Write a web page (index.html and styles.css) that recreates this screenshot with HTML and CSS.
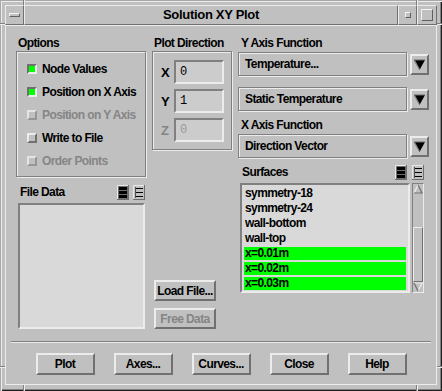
FILE: index.html
```html
<!DOCTYPE html>
<html>
<head>
<meta charset="utf-8">
<title>Solution XY Plot</title>
<link rel="stylesheet" href="styles.css">
</head>
<body>
<div class="window">
  <span class="tick tv tl"></span><span class="tick tv tr"></span>
  <span class="tick tv bl"></span><span class="tick tv br"></span>
  <span class="tick th lt"></span><span class="tick th rt"></span>
  <span class="tick th lb"></span><span class="tick th rb"></span>

  <div class="titlebar">
    <div class="tb-btn tb-menu"><span class="menu-bar"></span></div>
    <div class="tb-title">Solution XY Plot</div>
    <div class="tb-btn tb-min"><span class="min-sq"></span></div>
    <div class="tb-btn tb-max"><span class="max-sq"></span></div>
  </div>

  <div class="client">
    <div class="top">
      <div class="col col1">
        <div class="label">Options</div>
        <div class="frame options">
          <div class="toggle on"><span class="box"></span><span>Node Values</span></div>
          <div class="toggle on"><span class="box"></span><span>Position on X Axis</span></div>
          <div class="toggle disabled"><span class="box"></span><span>Position on Y Axis</span></div>
          <div class="toggle"><span class="box"></span><span>Write to File</span></div>
          <div class="toggle disabled"><span class="box"></span><span>Order Points</span></div>
        </div>
        <div class="list-head file-head">
          <span class="head-label">File Data</span>
          <span class="icons">
            <svg class="ico" width="12" height="15" viewBox="0 0 12 15"><rect x="0" y="0" width="12" height="15" fill="#6e6e6e"/><rect x="0" y="0" width="11" height="1" fill="#e8e8e8"/><rect x="0" y="0" width="1" height="14" fill="#e8e8e8"/><rect x="2" y="2" width="8" height="3" fill="#000"/><rect x="2" y="6" width="8" height="3" fill="#000"/><rect x="2" y="10" width="8" height="3" fill="#000"/></svg>
            <svg class="ico" width="12" height="15" viewBox="0 0 12 15"><rect x="0" y="0" width="12" height="15" fill="#6e6e6e"/><rect x="0" y="0" width="11" height="14" fill="#e8e8e8"/><rect x="1" y="1" width="10" height="13" fill="#c0c0c0"/><rect x="2" y="2" width="1" height="11" fill="#505050"/><rect x="3" y="3" width="7" height="1" fill="#000"/><rect x="3" y="7" width="7" height="1" fill="#000"/><rect x="3" y="11" width="7" height="1" fill="#000"/></svg>
          </span>
        </div>
        <div class="listbox file-list"></div>
      </div>

      <div class="col col2">
        <div class="label">Plot Direction</div>
        <div class="frame direction">
          <div class="dir-row"><span class="axis">X</span><span class="field">0</span></div>
          <div class="dir-row"><span class="axis">Y</span><span class="field">1</span></div>
          <div class="dir-row disabled"><span class="axis">Z</span><span class="field">0</span></div>
        </div>
        <div class="side-buttons">
          <div class="btn side-btn">Load File...</div>
          <div class="btn side-btn disabled">Free Data</div>
        </div>
      </div>

      <div class="col col3">
        <div class="label l3">Y Axis Function</div>
        <div class="opt-row">
          <div class="opt-box">Temperature...</div>
          <div class="opt-arrow"><svg width="15" height="17" viewBox="0 0 15 17"><polygon points="2,4 13,4 7.5,14" fill="#000"/><polyline points="2,4 13,4" stroke="#6a6a6a" stroke-width="1" fill="none"/><polyline points="2.5,4.5 7.5,13.5" stroke="#8a8a8a" stroke-width="1.2" fill="none"/></svg></div>
        </div>
        <div class="opt-row r2">
          <div class="opt-box">Static Temperature</div>
          <div class="opt-arrow"><svg width="15" height="17" viewBox="0 0 15 17"><polygon points="2,4 13,4 7.5,14" fill="#000"/><polyline points="2,4 13,4" stroke="#6a6a6a" stroke-width="1" fill="none"/><polyline points="2.5,4.5 7.5,13.5" stroke="#8a8a8a" stroke-width="1.2" fill="none"/></svg></div>
        </div>
        <div class="label l3 xlab">X Axis Function</div>
        <div class="opt-row">
          <div class="opt-box">Direction Vector</div>
          <div class="opt-arrow"><svg width="15" height="17" viewBox="0 0 15 17"><polygon points="2,4 13,4 7.5,14" fill="#000"/><polyline points="2,4 13,4" stroke="#6a6a6a" stroke-width="1" fill="none"/><polyline points="2.5,4.5 7.5,13.5" stroke="#8a8a8a" stroke-width="1.2" fill="none"/></svg></div>
        </div>
        <div class="list-head surf-head">
          <span class="head-label">Surfaces</span>
          <span class="icons">
            <svg class="ico" width="12" height="15" viewBox="0 0 12 15"><rect x="0" y="0" width="12" height="15" fill="#6e6e6e"/><rect x="0" y="0" width="11" height="1" fill="#e8e8e8"/><rect x="0" y="0" width="1" height="14" fill="#e8e8e8"/><rect x="2" y="2" width="8" height="3" fill="#000"/><rect x="2" y="6" width="8" height="3" fill="#000"/><rect x="2" y="10" width="8" height="3" fill="#000"/></svg>
            <svg class="ico" width="12" height="15" viewBox="0 0 12 15"><rect x="0" y="0" width="12" height="15" fill="#6e6e6e"/><rect x="0" y="0" width="11" height="14" fill="#e8e8e8"/><rect x="1" y="1" width="10" height="13" fill="#c0c0c0"/><rect x="2" y="2" width="1" height="11" fill="#505050"/><rect x="3" y="3" width="7" height="1" fill="#000"/><rect x="3" y="7" width="7" height="1" fill="#000"/><rect x="3" y="11" width="7" height="1" fill="#000"/></svg>
          </span>
        </div>
        <div class="surf-area">
          <div class="listbox surf-list">
            <div class="item"><div class="item-in">symmetry-18</div></div>
            <div class="item"><div class="item-in">symmetry-24</div></div>
            <div class="item"><div class="item-in">wall-bottom</div></div>
            <div class="item"><div class="item-in">wall-top</div></div>
            <div class="item sel"><div class="item-in">x=0.01m</div></div>
            <div class="item sel"><div class="item-in">x=0.02m</div></div>
            <div class="item sel"><div class="item-in">x=0.03m</div></div>
          </div>
          <div class="scrollbar">
            <svg class="sb-arrow" width="10" height="10" viewBox="0 0 10 10"><polyline points="1,9 5,1" stroke="#ececec" stroke-width="1.2" fill="none"/><polyline points="5,1 9,9 1,9" stroke="#707070" stroke-width="1.2" fill="none"/></svg>
            <div class="sb-gap"></div>
            <div class="sb-slider"></div>
            <div class="sb-rest"></div>
            <svg class="sb-arrow" width="10" height="10" viewBox="0 0 10 10"><polyline points="1,1 9,1 5,9" stroke="#ececec" stroke-width="1.2" fill="none"/><polyline points="1,1 5,9" stroke="#707070" stroke-width="1.2" fill="none"/></svg>
          </div>
        </div>
      </div>
    </div>

    <div class="separator"></div>

    <div class="buttons">
      <div class="btn main-btn">Plot</div>
      <div class="btn main-btn">Axes...</div>
      <div class="btn main-btn">Curves...</div>
      <div class="btn main-btn">Close</div>
      <div class="btn main-btn">Help</div>
    </div>
  </div>
</div>
</body>
</html>
```

FILE: styles.css
```css
* { box-sizing: border-box; }
html, body { margin: 0; padding: 0; }
body {
  width: 442px;
  height: 391px;
  overflow: hidden;
  background: #c0c0c0;
  color: #000;
  font-family: "Liberation Sans", Arial, sans-serif;
  font-weight: bold;
  font-size: 12px;
  letter-spacing: -0.6px;
}

.window {
  position: relative;
  width: 442px;
  height: 391px;
  padding: 5px 5px 6px 5px;
  display: flex;
  flex-direction: column;
  background: #c0c0c0;
  box-shadow: inset 1px 1px 0 #a8a8a8, inset 2px 2px 0 #ececec, inset -1px -1px 0 #202020, inset -2px -2px 0 #808080;
}

/* resize-handle ticks on the frame */
.tick { position: absolute; display: block; }
.tv { width: 2px; height: 5px; border-left: 1px solid #808080; border-right: 1px solid #ececec; }
.th { width: 5px; height: 2px; border-top: 1px solid #808080; border-bottom: 1px solid #ececec; }
.tl { left: 23px; top: 0; }
.tr { left: 416px; top: 0; }
.bl { left: 23px; bottom: 0; height: 6px; }
.br { left: 416px; bottom: 0; height: 6px; }
.lt { left: 0; top: 23px; }
.rt { right: 0; top: 23px; }
.lb { left: 0; top: 366px; }
.rb { right: 0; top: 366px; }

/* title bar */
.titlebar { display: flex; height: 20px; }
.tb-btn {
  width: 19px;
  height: 20px;
  border: 1px solid;
  border-color: #ececec #707070 #707070 #ececec;
  display: flex;
  align-items: center;
  justify-content: center;
}
.tb-max { width: 20px; }
.menu-bar {
  width: 11px; height: 4px;
  border: 1px solid;
  border-color: #f4f4f4 #606060 #606060 #f4f4f4;
}
.min-sq {
  width: 6px; height: 6px;
  border: 1px solid;
  border-color: #f4f4f4 #606060 #606060 #f4f4f4;
}
.max-sq {
  width: 12px; height: 12px;
  border: 1px solid;
  border-color: #f4f4f4 #606060 #606060 #f4f4f4;
}
.tb-title {
  flex: 1;
  height: 20px;
  border: 1px solid;
  border-color: #ececec #707070 #707070 #ececec;
  text-align: center;
  font-size: 13px;
  letter-spacing: -0.3px;
  line-height: 18px;
}

/* client area */
.client {
  flex: 1;
  border: 1px solid #ececec;
  padding: 10px 6px 0 10px;
  display: flex;
  flex-direction: column;
}
.top { display: flex; gap: 6px; }
.col { display: flex; flex-direction: column; }
.col1 { width: 130px; }
.col2 { width: 80px; }
.col3 { width: 192px; }

.label { height: 15px; line-height: 15px; padding-left: 2px; white-space: nowrap; }
.l3 { padding-left: 3px; }

.frame {
  border: 1px solid #808080;
  box-shadow: inset 1px 1px 0 #ececec, 1px 1px 0 #ececec;
}

/* options */
.options { height: 126px; padding: 5px 0 4px 10px; }
.toggle { height: 23px; display: flex; align-items: center; gap: 5px; white-space: nowrap; }
.box {
  width: 10px; height: 10px;
  border: 2px solid;
  border-color: #ececec #707070 #707070 #ececec;
  background: #c0c0c0;
}
.toggle.on .box {
  border-color: #707070 #ececec #ececec #707070;
  background: #00ff00;
}
.disabled { color: #858585; }
.toggle.disabled .box { border-color: #e4e4e4 #969696 #969696 #e4e4e4; }

/* list headers */
.list-head { display: flex; justify-content: space-between; align-items: center; height: 16px; }
.head-label { padding-left: 4px; }
.icons { display: flex; gap: 4px; }
.ico { display: block; }
.file-head { margin-top: 7px; padding-right: 1px; }
.surf-head { margin-top: 6px; padding-right: 6px; }
.surf-head .icons { gap: 5px; }

.listbox {
  border: 2px solid;
  border-color: #808080 #ececec #ececec #808080;
  background: #d9d9d9;
}
.file-list { margin: 3px 1px 0 2px; height: 126px; }

/* plot direction */
.direction { height: 99px; padding: 8px 7px 7px 8px; display: flex; flex-direction: column; gap: 5px; }
.dir-row { display: flex; align-items: center; height: 24px; }
.axis { width: 13px; font-size: 13px; }
.field {
  width: 50px; height: 24px;
  border: 2px solid;
  border-color: #808080 #ececec #ececec #808080;
  background: #cccccc;
  font-family: "Liberation Mono", "Courier New", monospace;
  font-weight: normal;
  letter-spacing: 0;
  font-size: 12px;
  line-height: 20px;
  padding-left: 4px;
}
.dir-row.disabled .field { color: #9a9a9a; }

.side-buttons { margin-top: auto; display: flex; flex-direction: column; gap: 7px; padding-left: 2px; }
.btn {
  border: 2px solid;
  border-color: #ececec #707070 #707070 #ececec;
  display: flex;
  align-items: center;
  justify-content: center;
  white-space: nowrap;
}
.side-btn { width: 62px; height: 21px; }

/* option menus */
.opt-row { display: flex; align-items: center; height: 24px; margin-top: 1px; }
.opt-row.r2 { margin-top: 11px; }
.opt-box {
  width: 169px; height: 24px;
  border: 1px solid #808080;
  box-shadow: inset 1px 1px 0 #ececec, 1px 1px 0 #ececec;
  line-height: 22px;
  padding-left: 6px;
  white-space: nowrap;
}
.opt-arrow {
  margin-left: 3px;
  width: 19px; height: 21px;
  border: 2px solid;
  border-color: #ececec #707070 #707070 #ececec;
}
.opt-arrow svg { display: block; }
.xlab { margin-top: 7px; }

/* surfaces list */
.surf-area { display: flex; margin-top: 3px; height: 110px; padding-left: 2px; }
.surf-list { width: 170px; height: 110px; padding: 1px 2px 0 2px; overflow: hidden; }
.item { height: 15px; padding: 1px 0; }
.item-in { height: 13px; line-height: 13px; padding-left: 1px; white-space: nowrap; }
.item.sel .item-in { background: #00ff00; }

.scrollbar {
  margin-left: 2px;
  width: 12px; height: 110px;
  border: 1px solid;
  border-color: #808080 #ececec #ececec #808080;
  display: flex;
  flex-direction: column;
  align-items: center;
}
.sb-arrow { display: block; flex: none; }
.sb-gap { height: 33px; flex: none; }
.sb-slider {
  width: 10px; height: 55px; flex: none;
  border: 1px solid;
  border-color: #ececec #707070 #707070 #ececec;
}
.sb-rest { flex: 1; }

/* bottom */
.separator {
  margin: 12px -1px 0 -5px;
  height: 2px;
  border-top: 1px solid #808080;
  border-bottom: 1px solid #ececec;
}
.buttons { display: flex; justify-content: center; gap: 19px; margin: 10px -1px 0 -5px; }
.main-btn { width: 59px; height: 22px; }
```
